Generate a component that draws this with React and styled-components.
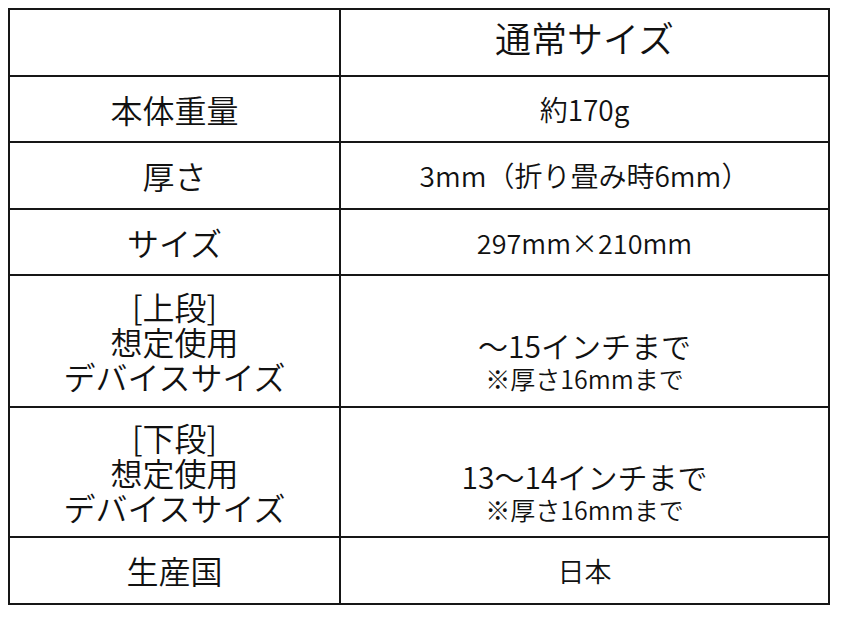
import React from "react";
import styled, { createGlobalStyle } from "styled-components";

const Global = createGlobalStyle`
  html, body { margin: 0; padding: 0; background: #fff; }
  body { font-family: "Noto Sans CJK JP", "Noto Sans", sans-serif; color: #111; }
`;

const Page = styled.div`
  padding: 8px 0 0 8px;
`;

const Table = styled.div`
  display: grid;
  grid-template-columns: 331px 489px;
  width: 822px;
  border-top: 2px solid #161616;
  border-left: 2px solid #161616;
  box-sizing: border-box;
`;

const Cell = styled.div`
  box-sizing: border-box;
  height: ${(p) => p.$h}px;
  border-right: 2px solid #161616;
  border-bottom: 2px solid #161616;
  display: flex;
  flex-direction: column;
  align-items: center;
  justify-content: center;
  text-align: center;
  padding-top: ${(p) => p.$pt || 0}px;
`;

const Label = styled.div`
  font-size: 32px;
  line-height: 35px;
  font-weight: 350;
`;

const Header = styled.div`
  font-size: 36px;
  line-height: 40px;
  font-weight: 350;
  margin-top: -12px;
`;

const Value = styled.div`
  font-size: ${(p) => p.$size || 28}px;
  line-height: 33px;
  font-weight: 350;
`;

const Note = styled.div`
  font-size: 25px;
  line-height: 33px;
  font-weight: 350;
`;

export default function App() {
  return (
    <>
      <Global />
      <Page>
        <Table>
          <Cell $h={67}></Cell>
          <Cell $h={67}>
            <Header>通常サイズ</Header>
          </Cell>

          <Cell $h={66}>
            <Label>本体重量</Label>
          </Cell>
          <Cell $h={66}>
            <Value>約170g</Value>
          </Cell>

          <Cell $h={67}>
            <Label>厚さ</Label>
          </Cell>
          <Cell $h={67}>
            <Value>3mm（折り畳み時6mm）</Value>
          </Cell>

          <Cell $h={66}>
            <Label>サイズ</Label>
          </Cell>
          <Cell $h={66}>
            <Value $size={27}>297mm×210mm</Value>
          </Cell>

          <Cell $h={132}>
            <Label>[上段]</Label>
            <Label>想定使用</Label>
            <Label>デバイスサイズ</Label>
          </Cell>
          <Cell $h={132} $pt={42}>
            <Value $size={30}>～15インチまで</Value>
            <Note>※厚さ16mmまで</Note>
          </Cell>

          <Cell $h={130}>
            <Label>[下段]</Label>
            <Label>想定使用</Label>
            <Label>デバイスサイズ</Label>
          </Cell>
          <Cell $h={130} $pt={42}>
            <Value $size={30}>13～14インチまで</Value>
            <Note>※厚さ16mmまで</Note>
          </Cell>

          <Cell $h={67}>
            <Label>生産国</Label>
          </Cell>
          <Cell $h={67}>
            <Value $size={27}>日本</Value>
          </Cell>
        </Table>
      </Page>
    </>
  );
}
